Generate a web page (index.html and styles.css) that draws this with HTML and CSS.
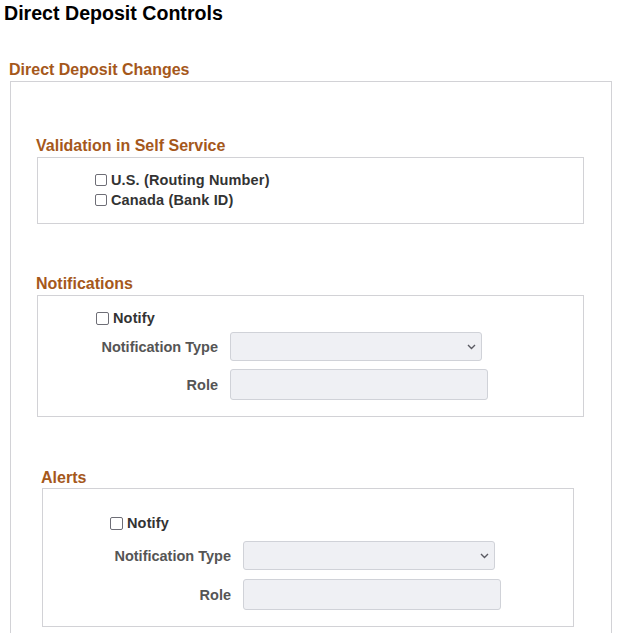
FILE: index.html
```html
<!DOCTYPE html>
<html lang="en">
<head>
<meta charset="utf-8">
<title>Direct Deposit Controls</title>
<link rel="stylesheet" href="styles.css">
</head>
<body>
<h1 class="page-title">Direct Deposit Controls</h1>
<h2 class="group-title">Direct Deposit Changes</h2>
<div class="group">
  <section class="section section-validation">
    <h3 class="section-title">Validation in Self Service</h3>
    <div class="box box-validation">
      <label class="check-row"><input type="checkbox" class="check"><span>U.S. (Routing Number)</span></label>
      <label class="check-row"><input type="checkbox" class="check"><span>Canada (Bank ID)</span></label>
    </div>
  </section>

  <section class="section section-notifications">
    <h3 class="section-title">Notifications</h3>
    <div class="box box-notify">
      <label class="check-row"><input type="checkbox" class="check"><span>Notify</span></label>
      <div class="field-row field-type">
        <span class="field-label">Notification Type</span>
        <div class="select">
          <svg class="chevron" width="9" height="6" viewBox="0 0 9 6"><path d="M1 1l3.5 3.5L8 1" fill="none" stroke="#5a5a62" stroke-width="1.4"/></svg>
        </div>
      </div>
      <div class="field-row field-role">
        <span class="field-label">Role</span>
        <input type="text" class="text-input">
      </div>
    </div>
  </section>

  <section class="section section-alerts">
    <h3 class="section-title">Alerts</h3>
    <div class="box box-alerts">
      <label class="check-row"><input type="checkbox" class="check"><span>Notify</span></label>
      <div class="field-row field-type">
        <span class="field-label">Notification Type</span>
        <div class="select">
          <svg class="chevron" width="9" height="6" viewBox="0 0 9 6"><path d="M1 1l3.5 3.5L8 1" fill="none" stroke="#5a5a62" stroke-width="1.4"/></svg>
        </div>
      </div>
      <div class="field-row field-role">
        <span class="field-label">Role</span>
        <input type="text" class="text-input">
      </div>
    </div>
  </section>
</div>
</body>
</html>
```
FILE: styles.css
```css
* { box-sizing: border-box; }

body {
  margin: 0;
  font-family: "Liberation Sans", Arial, sans-serif;
  background: #fff;
  color: #333;
}

.page-title {
  margin: 0;
  padding: 2px 0 0 4px;
  font-size: 19.6px;
  line-height: 22px;
  font-weight: bold;
  color: #000;
}

.group-title {
  margin: 37px 0 2px 9px;
  font-size: 16px;
  line-height: 18px;
  font-weight: bold;
  color: #a5581b;
}

.group {
  margin-left: 10px;
  width: 602px;
  border: 1px solid #d2d2d6;
  border-bottom: none;
  padding: 0 0 30px 26px;
}

.section-title {
  margin: 0 0 2px -1px;
  font-size: 16px;
  line-height: 18px;
  font-weight: bold;
  color: #a5581b;
}

.section-validation { margin-top: 55px; }
.section-notifications { margin-top: 51px; }
.section-alerts { margin-top: 52px; margin-left: 5px; }
.section-alerts .section-title { margin-bottom: 1px; }

.box {
  border: 1px solid #d2d2d6;
  width: 547px;
}

.box-validation { padding: 12px 0 13px 57px; }
.box-notify { padding: 12px 0 16px 58px; }
.box-alerts { width: 532px; padding: 24px 0 16px 67px; }

.check-row {
  display: flex;
  align-items: center;
  height: 20px;
  font-size: 14.5px;
  font-weight: bold;
  letter-spacing: 0.15px;
  color: #333;
  gap: 4px;
}

.check {
  appearance: none;
  -webkit-appearance: none;
  margin: 0;
  width: 12px;
  height: 12px;
  border: 1px solid #6e6e76;
  border-radius: 2px;
  background: #fff;
  flex: none;
}

.box-notify .check, .box-alerts .check { width: 13px; height: 13px; }

.field-row {
  display: flex;
  align-items: center;
}

.box-notify .field-type { margin-top: 4px; }
.box-alerts .field-type { margin-top: 8px; }
.box-notify .field-role { margin-top: 8px; }
.box-alerts .field-role { margin-top: 9px; }

.field-label {
  width: 122px;
  margin-right: 12px;
  text-align: right;
  font-size: 14.5px;
  font-weight: bold;
  color: #555;
  white-space: nowrap;
}

.box-alerts .field-label { width: 121px; }

.select {
  width: 252px;
  height: 29px;
  border: 1px solid #d0d2d8;
  border-radius: 3px;
  background: #eff0f4;
  display: flex;
  align-items: center;
  justify-content: flex-end;
  padding-right: 5px;
}

.text-input {
  width: 258px;
  height: 31px;
  margin: 0;
  border: 1px solid #d0d2d8;
  border-radius: 3px;
  background: #eff0f4;
  font: inherit;
}
```
